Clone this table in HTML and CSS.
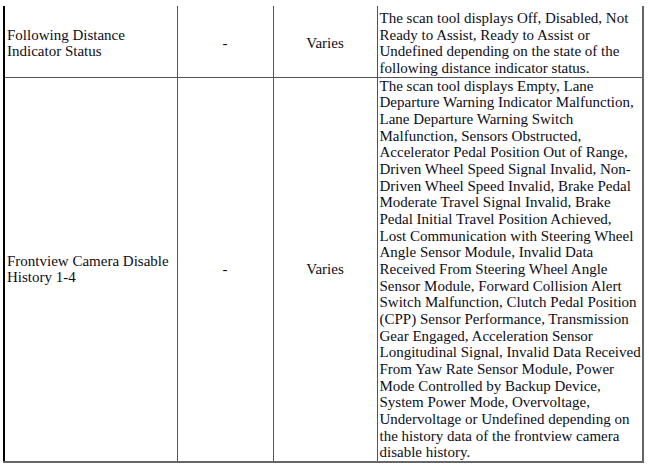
FILE: index.html
```html
<!DOCTYPE html>
<html>
<head>
<meta charset="utf-8">
<link rel="stylesheet" href="styles.css">
</head>
<body>
<table class="data">
  <colgroup>
    <col class="c-name">
    <col class="c-unit">
    <col class="c-range">
    <col class="c-desc">
  </colgroup>
  <tr class="first">
    <td class="name">Following Distance<br>Indicator Status</td>
    <td class="mid">-</td>
    <td class="mid">Varies</td>
    <td class="desc">The scan tool displays Off, Disabled, Not<br>Ready to Assist, Ready to Assist or<br>Undefined depending on the state of the<br>following distance indicator status.</td>
  </tr>
  <tr>
    <td class="name">Frontview Camera Disable<br>History 1-4</td>
    <td class="mid">-</td>
    <td class="mid">Varies</td>
    <td class="desc">The scan tool displays Empty, Lane<br>Departure Warning Indicator Malfunction,<br>Lane Departure Warning Switch<br>Malfunction, Sensors Obstructed,<br>Accelerator Pedal Position Out of Range,<br>Driven Wheel Speed Signal Invalid, Non-<br>Driven Wheel Speed Invalid, Brake Pedal<br>Moderate Travel Signal Invalid, Brake<br>Pedal Initial Travel Position Achieved,<br>Lost Communication with Steering Wheel<br>Angle Sensor Module, Invalid Data<br>Received From Steering Wheel Angle<br>Sensor Module, Forward Collision Alert<br>Switch Malfunction, Clutch Pedal Position<br>(CPP) Sensor Performance, Transmission<br>Gear Engaged, Acceleration Sensor<br>Longitudinal Signal, Invalid Data Received<br>From Yaw Rate Sensor Module, Power<br>Mode Controlled by Backup Device,<br>System Power Mode, Overvoltage,<br>Undervoltage or Undefined depending on<br>the history data of the frontview camera<br>disable history.</td>
  </tr>
</table>
</body>
</html>
```

FILE: styles.css
```css
html, body {
  margin: 0;
  padding: 0;
  background: #fff;
}
body {
  padding: 6px 0 0 3px;
  font-family: "Liberation Serif", "Times New Roman", serif;
  font-size: 15px;
  line-height: 16.67px;
  color: #0d0d1a;
}
.data {
  border-collapse: collapse;
  table-layout: fixed;
  width: 641px;
  border-left: 2px solid #000;
  border-right: 2px solid #666;
  border-bottom: 2px solid #666;
}
.c-name { width: 173px; }
.c-unit { width: 96px; }
.c-range { width: 104px; }
.c-desc { width: 266px; }
.data td {
  border: 1px solid #555;
  padding: 0 2px;
  vertical-align: middle;
}
.data tr.first td {
  border-top: none;
  padding-top: 4px;
}
.data td.mid {
  text-align: center;
}
.data td.desc {
  white-space: nowrap;
}
```
